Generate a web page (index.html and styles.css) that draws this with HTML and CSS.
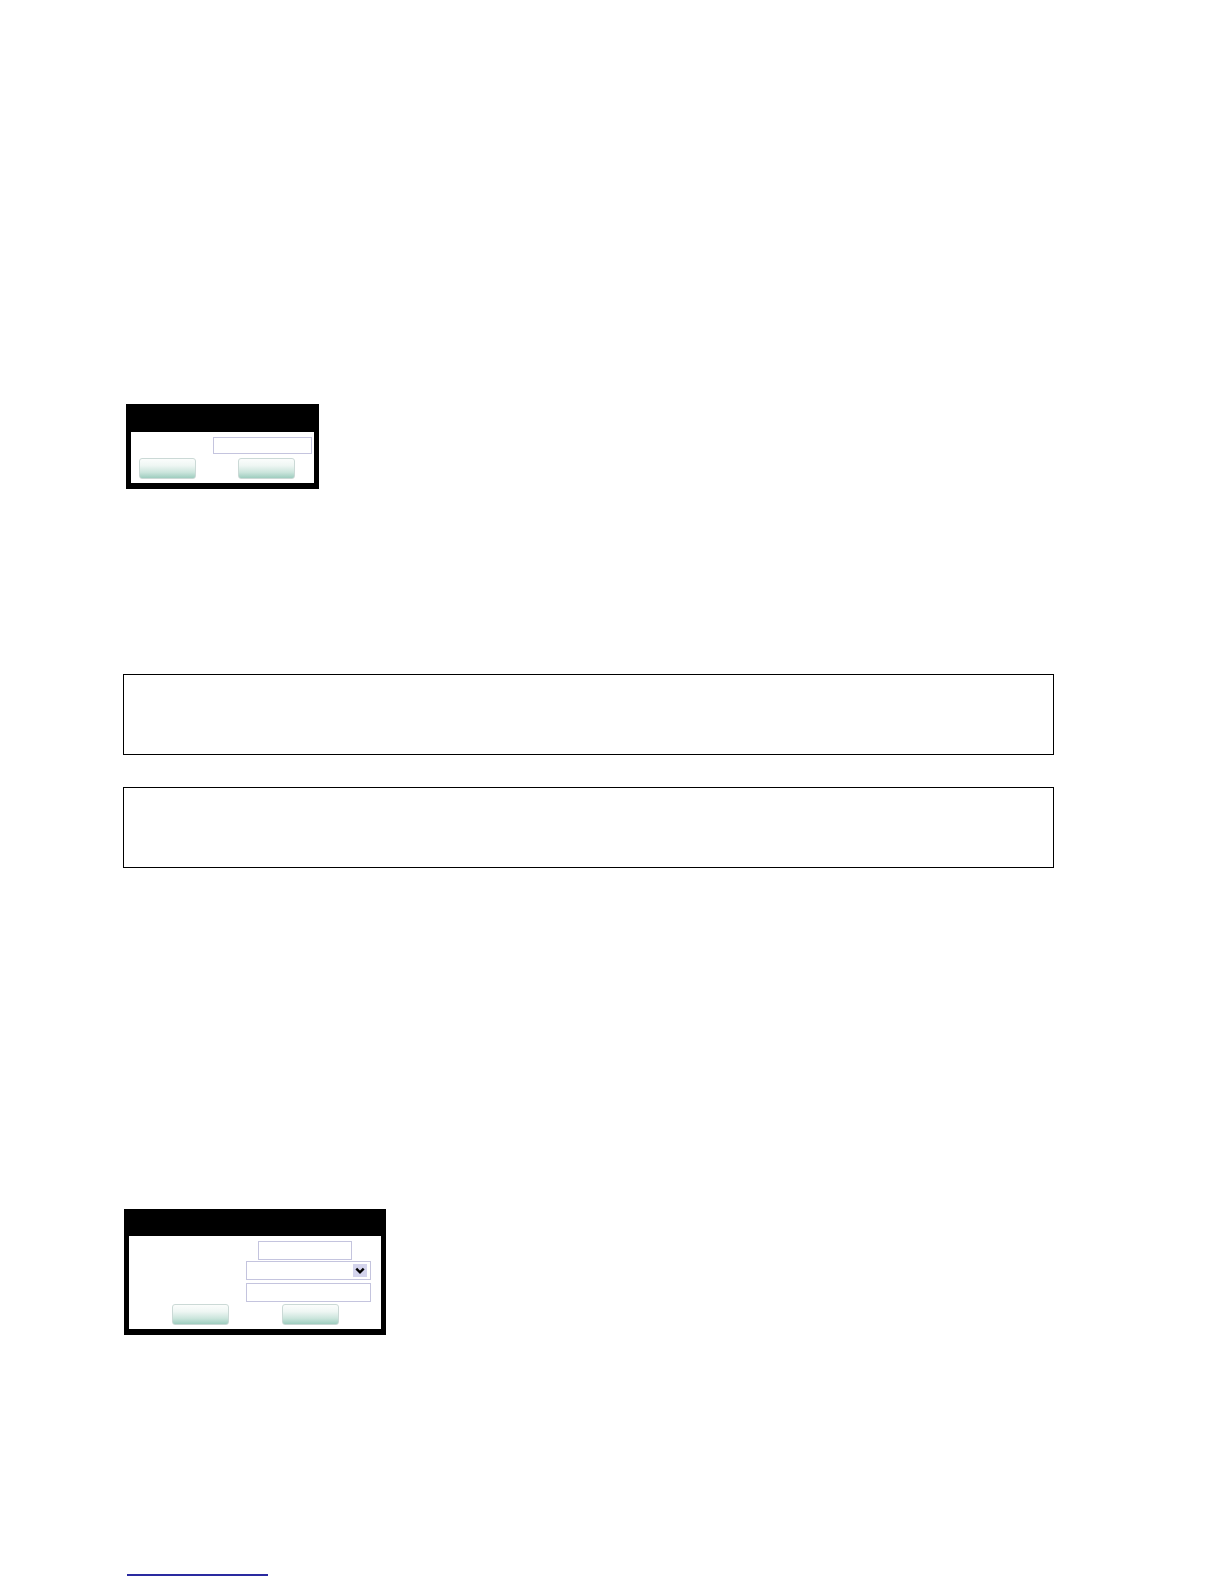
FILE: index.html
```html
<!DOCTYPE html>
<html>
<head>
<meta charset="utf-8">
<link rel="stylesheet" href="styles.css">
</head>
<body>
<div class="page">
  <div class="dialog dialog-small">
    <div class="dialog-head"></div>
    <div class="dialog-body">
      <div class="row row-end"><div class="field field-a"></div></div>
      <div class="row buttons-a"><div class="btn"></div><div class="btn"></div></div>
    </div>
  </div>

  <div class="panel panel-first"></div>
  <div class="panel panel-second"></div>

  <div class="dialog dialog-large">
    <div class="dialog-head"></div>
    <div class="dialog-body body-large">
      <div class="row"><div class="field field-b"></div></div>
      <div class="row"><div class="field field-select"><span class="chev"><svg width="14" height="13" viewBox="0 0 14 13"><path d="M3.3 4.6 L7 8.3 L10.7 4.6" fill="none" stroke="#000" stroke-width="2.4"/></svg></span></div></div>
      <div class="row"><div class="field field-c"></div></div>
      <div class="row buttons-b"><div class="btn"></div><div class="btn"></div></div>
    </div>
  </div>

  <div class="link-line"></div>
</div>
</body>
</html>
```

FILE: styles.css
```css
html, body {
  margin: 0;
  padding: 0;
  background: #ffffff;
  font-family: "Liberation Sans", Arial, sans-serif;
}
.page {
  padding-top: 404px;
  display: flex;
  flex-direction: column;
  align-items: flex-start;
}
.dialog {
  background: #000;
  display: flex;
  flex-direction: column;
}
.dialog-small {
  margin-left: 126px;
  width: 193px;
}
.dialog-head {
  height: 28px;
}
.dialog-body {
  background: #fff;
  margin: 0 5px 6px 5px;
  height: 51px;
  box-sizing: border-box;
  padding: 5px 2px 0 8px;
  display: flex;
  flex-direction: column;
}
.row {
  display: flex;
}
.row-end {
  justify-content: flex-end;
}
.field {
  box-sizing: border-box;
  border: 1px solid #c4c4de;
  background: #fff;
}
.field-a {
  width: 99px;
  height: 17px;
}
.buttons-a {
  margin-top: 4px;
  gap: 42px;
}
.btn {
  box-sizing: border-box;
  width: 57px;
  height: 21px;
  border: 1px solid #cbd9d6;
  border-radius: 3px;
  background: linear-gradient(to bottom, #fbfdfc 0%, #eef6f3 35%, #cbe5dc 70%, #9ecdbf 100%);
}
.panel {
  margin-left: 123px;
  width: 931px;
  height: 81px;
  box-sizing: border-box;
  border: 1px solid #000;
}
.panel-first {
  margin-top: 185px;
}
.panel-second {
  margin-top: 32px;
}
.dialog-large {
  margin-top: 341px;
  margin-left: 124px;
  width: 262px;
}
.dialog-large .dialog-head {
  height: 27px;
}
.body-large {
  height: 93px;
  padding: 5px 0 0 0;
}
.field-b {
  margin-left: 129px;
  width: 94px;
  height: 19px;
}
.field-select {
  margin-left: 117px;
  margin-top: 1px;
  width: 125px;
  height: 19px;
  display: flex;
  justify-content: flex-end;
  align-items: center;
  padding-right: 3px;
}
.chev {
  width: 14px;
  height: 13px;
  background: #d3d3ec;
  display: flex;
}
.field-c {
  margin-left: 117px;
  margin-top: 3px;
  width: 125px;
  height: 19px;
}
.buttons-b {
  margin-top: 2px;
  padding-left: 43px;
  gap: 53px;
}
.link-line {
  margin-top: 239px;
  margin-left: 127px;
  width: 141px;
  height: 2px;
  background: #2a2aa0;
}
```
